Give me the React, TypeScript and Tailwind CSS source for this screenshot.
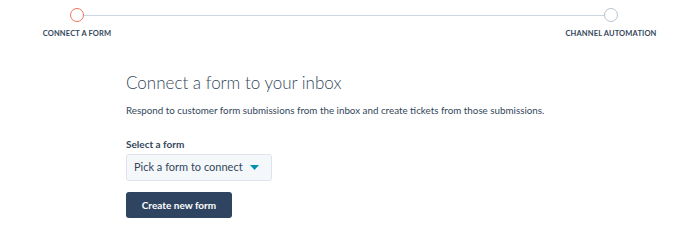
export default function App() {
  return (
    <div className="h-[238px] w-[688px] bg-white font-['Lato',sans-serif] text-[#33475b]">
      <div className="relative flex justify-between px-[31px] pt-[8px]">
        <div className="absolute left-[84px] right-[82px] top-[15px] h-px bg-[#cbd6e2]" />
        <div className="relative flex w-[92px] flex-col items-center">
          <div className="h-[14px] w-[14px] rounded-full border-[1.5px] border-[#f2735b] bg-white" />
          <span className="mt-[6px] whitespace-nowrap text-[7.5px] font-bold uppercase leading-[11px] tracking-[0.02em] text-[#33475b]">
            Connect a form
          </span>
        </div>
        <div className="relative flex w-[92px] flex-col items-center">
          <div className="h-[14px] w-[14px] rounded-full border-[1.5px] border-[#b8c5d3] bg-white" />
          <span className="mt-[6px] whitespace-nowrap text-[7.5px] font-bold uppercase leading-[11px] tracking-[0.02em] text-[#33475b]">
            Channel automation
          </span>
        </div>
      </div>

      <div className="ml-[126px] mt-[33px]">
        <h1 className="text-[17px] font-light leading-[22px] text-[#33475b]">
          Connect a form to your inbox
        </h1>
        <p className="mt-[9px] text-[9.8px] leading-[14px] text-[#33475b]">
          Respond to customer form submissions from the inbox and create tickets from those submissions.
        </p>
        <label className="mt-[20px] block text-[10px] font-bold leading-[14px] text-[#33475b]">
          Select a form
        </label>
        <button
          type="button"
          className="mt-[3px] flex h-[27px] w-[146px] items-center justify-between rounded-[3px] border border-[#dfe3eb] bg-[#f5f8fa] pl-[7px] pr-[12px] text-[11px] text-[#33475b]"
        >
          <span className="whitespace-nowrap">Pick a form to connect</span>
          <svg width="9" height="5" viewBox="0 0 9 5" className="shrink-0">
            <path d="M0 0h9L4.5 5z" fill="#0091ae" />
          </svg>
        </button>
        <button
          type="button"
          className="mt-[11px] flex h-[26px] w-[106px] items-center justify-center rounded-[3px] bg-[#2e4460] text-[10px] font-bold text-white"
        >
          Create new form
        </button>
      </div>
    </div>
  );
}
